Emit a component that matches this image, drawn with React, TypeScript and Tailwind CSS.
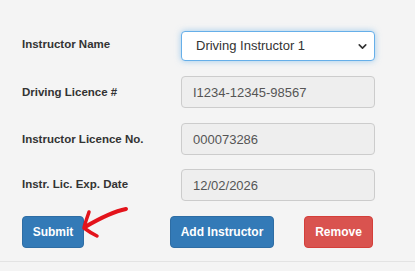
import { ChevronDown } from 'lucide-react';

const FONT = { fontFamily: '"Liberation Sans", Arial, sans-serif' };

function Field({ label, value, top }: { label: string; value: string; top: string }) {
  return (
    <div className="flex items-start">
      <label className={`w-[159px] shrink-0 text-[11.5px] leading-[14px] font-bold text-[#333] ${top}`}>
        {label}
      </label>
      <input
        readOnly
        value={value}
        className="w-[194px] h-[32px] px-[11px] rounded-[4px] border border-[#cccccc] bg-[#eeeeee] text-[13px] text-[#555] outline-none"
        style={FONT}
      />
    </div>
  );
}

function Arrow() {
  return (
    <svg
      className="absolute left-[80px] top-[204px] pointer-events-none"
      width="52"
      height="36"
      viewBox="0 0 52 36"
      fill="none"
    >
      <path
        d="M46 5 C36 7 22 13 5 23"
        stroke="#e3131b"
        strokeWidth="4"
        strokeLinecap="round"
      />
      <path
        d="M9 8 C7 14 5 19 4 24 C8 27 13 30 17 32"
        stroke="#e3131b"
        strokeWidth="3.5"
        strokeLinecap="round"
        strokeLinejoin="round"
      />
    </svg>
  );
}

export default function App() {
  return (
    <div className="w-[415px] h-[271px] bg-[#f4f4f4] relative overflow-hidden" style={FONT}>
      <div className="h-[262px] border-b border-[#e3e3e3] pt-[31px] pl-[22px] flex flex-col">
        <div className="flex items-start">
          <label className="w-[159px] shrink-0 pt-[6px] text-[11.5px] leading-[14px] font-bold text-[#333]">
            Instructor Name
          </label>
          <div className="relative w-[194px] h-[30px]">
            <select
              className="appearance-none w-full h-full pl-[14px] pr-8 rounded-[4px] border border-[#66afe9] bg-white text-[13px] text-[#333] outline-none shadow-[0_0_6px_rgba(102,175,233,0.6)]"
              style={FONT}
              defaultValue="1"
            >
              <option value="1">Driving Instructor 1</option>
            </select>
            <ChevronDown
              size={13}
              strokeWidth={3}
              className="absolute right-[6px] top-[9px] text-[#333] pointer-events-none"
            />
          </div>
        </div>

        <div className="mt-[15px]">
          <Field label="Driving Licence #" value="I1234-12345-98567" top="pt-[9px]" />
        </div>
        <div className="mt-[15px]">
          <Field label="Instructor Licence No." value="000073286" top="pt-[9px]" />
        </div>
        <div className="mt-[14px]">
          <Field label="Instr. Lic. Exp. Date" value="12/02/2026" top="pt-[8px]" />
        </div>

        <div className="mt-[15px] flex items-center">
          <button className="w-[62px] h-[32px] rounded-[4px] bg-[#337ab7] border border-[#2e6da4] text-white text-[12px] font-bold">
            Submit
          </button>
          <button className="ml-[86px] w-[104px] h-[32px] rounded-[4px] bg-[#337ab7] border border-[#2e6da4] text-white text-[12px] font-bold">
            Add Instructor
          </button>
          <button className="ml-[30px] w-[69px] h-[32px] rounded-[4px] bg-[#d9534f] border border-[#d43f3a] text-white text-[12px] font-bold">
            Remove
          </button>
        </div>
      </div>
      <Arrow />
    </div>
  );
}
